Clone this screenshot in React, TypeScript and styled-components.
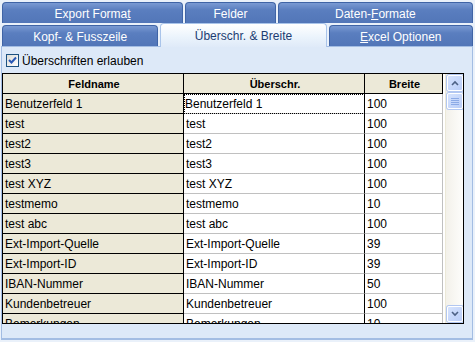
import React from 'react';
import styled, { createGlobalStyle } from 'styled-components';

const GlobalStyle = createGlobalStyle`
    html, body {
        margin: 0;
        padding: 0;
        background: #eaf1fa;
    }
    body {
        font-family: Tahoma, "Liberation Sans", Arial, sans-serif;
        font-size: 11px;
    }
`;

const Window = styled.div`
    width: 475px;
    height: 342px;
    padding: 2px 2px 0 1px;
    box-sizing: border-box;
    display: flex;
    flex-direction: column;
`;

type TabRowProps = { gapBelow: number };

const TabRow = styled.div<TabRowProps>`
    display: flex;
    gap: 2px;
    height: 21px;
    margin-bottom: ${p => p.gapBelow}px;
    padding-left: 1px;
    align-items: flex-end;
`;

type TabProps = { width: number; selected?: boolean };

const Tab = styled.div<TabProps>`
    width: ${p => p.width}px;
    height: ${p => (p.selected ? 24 : 21)}px;
    margin-bottom: ${p => (p.selected ? -1 : 0)}px;
    box-sizing: border-box;
    border: 1px solid ${p => (p.selected ? '#a9c4ea' : '#3f64a6')};
    border-bottom: none;
    border-radius: 4px 4px 0 0;
    background: ${p => (p.selected
        ? 'linear-gradient(#ffffff, #eaf3fc 60%, #dfeaf8)'
        : 'linear-gradient(#7a9ad3, #5a7ebf 35%, #5276b8)')};
    color: ${p => (p.selected ? '#1d3c72' : '#ffffff')};
    font-size: 12px;
    display: flex;
    align-items: center;
    justify-content: center;
    padding-top: 1px;
    position: relative;
    z-index: ${p => (p.selected ? 2 : 1)};
`;

const Key = styled.span`
    text-decoration: underline;
`;

const Panel = styled.div`
    flex: 1;
    min-height: 0;
    background: #dde9f8;
    border: 1px solid #a3bde3;
    border-bottom: 2px solid #a3bde3;
    box-sizing: border-box;
    display: flex;
    flex-direction: column;
    padding: 6px 8px 14px 0;
    margin-bottom: 2px;
`;

const CheckRow = styled.label`
    display: flex;
    align-items: center;
    gap: 3px;
    height: 15px;
    padding-left: 4px;
    margin-bottom: 5px;
    color: #000;
    font-size: 12px;
`;

const Box = styled.span`
    width: 13px;
    height: 13px;
    box-sizing: border-box;
    border: 1px solid #1c5180;
    background: linear-gradient(135deg, #dcdcd7, #ffffff);
    display: inline-flex;
    align-items: center;
    justify-content: center;
`;

const Grid = styled.div`
    flex: 1;
    min-height: 0;
    display: flex;
    border: 1px solid #000;
    background: #fff;
    overflow: hidden;
`;

const TableArea = styled.div`
    flex: 1;
    min-height: 0;
    overflow: hidden;
`;

const Row = styled.div`
    display: grid;
    grid-template-columns: 181px 181px 78px;
    height: 20px;
`;

type CellProps = { kind: 'head' | 'fixed' | 'edit'; last?: boolean; focus?: boolean };

const Cell = styled.div<CellProps>`
    box-sizing: border-box;
    height: 20px;
    padding: ${p => (p.focus ? '0 0 0 1px' : '0 0 0 2px')};
    display: flex;
    align-items: center;
    justify-content: ${p => (p.kind === 'head' ? 'center' : 'flex-start')};
    font-weight: ${p => (p.kind === 'head' ? 'bold' : 'normal')};
    font-size: ${p => (p.kind === 'head' ? 11 : 12)}px;
    background: ${p => (p.kind === 'edit' ? '#ffffff' : '#ece9d8')};
    border-right: 1px solid ${p => (p.kind === 'edit' && p.last ? '#c0c0c0' : '#000')};
    border-bottom: 1px solid ${p => (p.kind === 'edit' ? '#c0c0c0' : '#000')};
    white-space: nowrap;
    overflow: hidden;
    ${p => p.focus && `
        outline: 1px dotted #000;
        outline-offset: -1px;
    `}
`;

const ScrollBar = styled.div`
    width: 18px;
    border-left: 1px solid #ece9d8;
    background: linear-gradient(90deg, #f3f1ea, #fdfdfb);
    display: flex;
    flex-direction: column;
    padding: 1px 0;
    box-sizing: border-box;
`;

const ScrollButton = styled.div`
    width: 16px;
    height: 16px;
    margin-left: 1px;
    box-sizing: border-box;
    border: 1px solid #fff;
    border-radius: 2px;
    background: linear-gradient(135deg, #d6e3fd, #b9cdf8);
    box-shadow: 0 0 0 1px #b2c7f1;
    display: flex;
    align-items: center;
    justify-content: center;
`;

const Thumb = styled(ScrollButton)`
    margin-top: 2px;
`;

const Spacer = styled.div`
    flex: 1;
`;

const rows: [string, string, string][] = [
    ['Benutzerfeld 1', 'Benutzerfeld 1', '100'],
    ['test', 'test', '100'],
    ['test2', 'test2', '100'],
    ['test3', 'test3', '100'],
    ['test XYZ', 'test XYZ', '100'],
    ['testmemo', 'testmemo', '10'],
    ['test abc', 'test abc', '100'],
    ['Ext-Import-Quelle', 'Ext-Import-Quelle', '39'],
    ['Ext-Import-ID', 'Ext-Import-ID', '39'],
    ['IBAN-Nummer', 'IBAN-Nummer', '50'],
    ['Kundenbetreuer', 'Kundenbetreuer', '100'],
    ['Bemerkungen', 'Bemerkungen', '10'],
];

const Arrow = ({ up }: { up?: boolean }) => (
    <svg width="8" height="6" viewBox="0 0 8 6">
        <path
            d={up ? 'M1 5 L4 2 L7 5' : 'M1 1 L4 4 L7 1'}
            fill="none"
            stroke="#4d6185"
            strokeWidth="1.6"
        />
    </svg>
);

const Grip = () => (
    <svg width="8" height="7" viewBox="0 0 8 7">
        {[0.5, 2.5, 4.5, 6.5].map(y => (
            <line key={y} x1="0" x2="8" y1={y} y2={y} stroke="#8caae6" strokeWidth="1" />
        ))}
    </svg>
);

export default function App() {
    return (
        <>
            <GlobalStyle />
            <Window>
                <TabRow gapBelow={2}>
                    <Tab width={182}>Export Forma<Key>t</Key></Tab>
                    <Tab width={91}>Felder</Tab>
                    <Tab width={196}>Daten-<Key>F</Key>ormate</Tab>
                </TabRow>
                <TabRow gapBelow={0}>
                    <Tab width={157}>Kopf- &amp; Fusszeile</Tab>
                    <Tab width={167} selected>Überschr. &amp; Breite</Tab>
                    <Tab width={145}><Key>E</Key>xcel Optionen</Tab>
                </TabRow>
                <Panel>
                    <CheckRow>
                        <Box>
                            <svg width="9" height="9" viewBox="0 0 9 9">
                                <path d="M1 4 L3.5 6.5 L8 1.5" fill="none" stroke="#2a58b5" strokeWidth="2" />
                            </svg>
                        </Box>
                        Überschriften erlauben
                    </CheckRow>
                    <Grid>
                        <TableArea>
                            <Row>
                                <Cell kind="head">Feldname</Cell>
                                <Cell kind="head">Überschr.</Cell>
                                <Cell kind="head">Breite</Cell>
                            </Row>
                            {rows.map(([name, title, width], i) => (
                                <Row key={name}>
                                    <Cell kind="fixed">{name}</Cell>
                                    <Cell kind="edit" focus={i === 0}>{title}</Cell>
                                    <Cell kind="edit" last>{width}</Cell>
                                </Row>
                            ))}
                        </TableArea>
                        <ScrollBar>
                            <ScrollButton><Arrow up /></ScrollButton>
                            <Thumb><Grip /></Thumb>
                            <Spacer />
                            <ScrollButton><Arrow /></ScrollButton>
                        </ScrollBar>
                    </Grid>
                </Panel>
            </Window>
        </>
    );
}
